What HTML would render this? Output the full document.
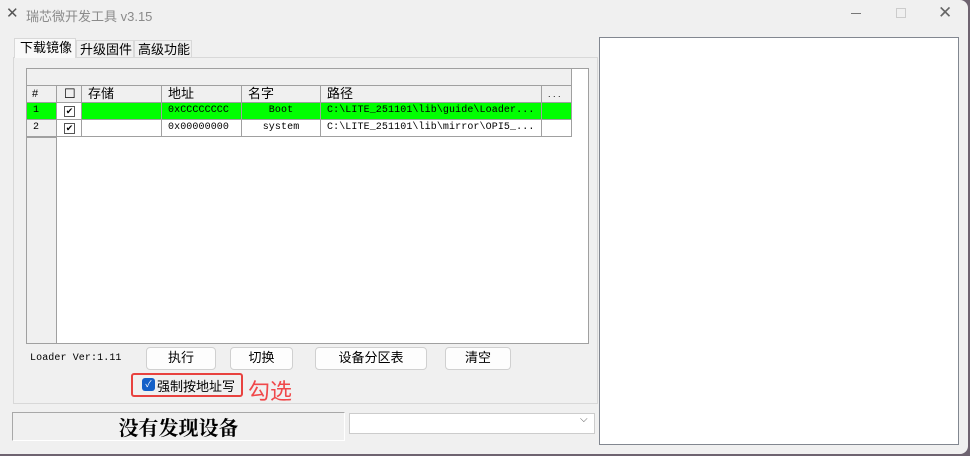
<!DOCTYPE html>
<html><head><meta charset="utf-8"><style>
*{margin:0;padding:0;box-sizing:border-box}
body{width:970px;height:456px;background:#6e6370;position:relative;overflow:hidden;font-family:"Liberation Sans","Noto Sans CJK SC",sans-serif}
.win{position:absolute;left:0;top:0;width:968px;height:454px;background:#f0f0f0;border-radius:0 8px 8px 0}
.a{position:absolute}
.t{font-size:13px;color:#000;white-space:nowrap}
.mono{font-family:"Liberation Mono","Noto Sans CJK SC",monospace;font-size:10px;letter-spacing:0.1px}
.btn{position:absolute;background:#fdfdfd;border:1px solid #d0d0d0;border-radius:4px;font-size:13px;text-align:center;line-height:20px}
.cell{position:absolute;border-right:1px solid #a0a0a0;border-bottom:1px solid #a0a0a0;height:17px;line-height:16px}
.cb{position:absolute;width:11px;height:11px;border:1px solid #555;background:#fff;font-size:9px;line-height:9px;text-align:center}
</style></head><body><div class="win">
<div class="a t" style="left:6px;top:4px;font-size:15px;color:#555">✕</div>
<div class="a t" style="left:26px;top:6px;color:#8a8a8a;font-size:13px">瑞芯微开发工具 v3.15</div>
<div class="a" style="left:851px;top:13px;width:10px;height:1px;background:#777"></div>
<div class="a" style="left:896px;top:8px;width:10px;height:10px;border:1px solid #ccc"></div>
<div class="a t" style="left:938px;top:3px;font-size:17px;color:#666">✕</div>

<div class="a" style="left:13px;top:57px;width:585px;height:347px;border:1px solid #d8d8d8;background:#f0f0f0"></div>
<div class="a t" style="left:14px;top:38px;width:62px;height:20px;background:#f9f9f9;border:1px solid #d8d8d8;border-bottom:none;padding-left:5px;line-height:18px">下载镜像</div>
<div class="a t" style="left:76px;top:40px;width:58px;height:17px;border:1px solid #d8d8d8;border-bottom:none;padding-left:3px;line-height:17px">升级固件</div>
<div class="a t" style="left:134px;top:40px;width:58px;height:17px;border:1px solid #d8d8d8;border-bottom:none;padding-left:3px;line-height:17px">高级功能</div>

<div class="a" style="left:26px;top:68px;width:563px;height:276px;border:1px solid #a0a0a0;background:#fff"></div>
<div class="a" style="left:27px;top:69px;width:545px;height:17px;background:#f0f0f0;border-bottom:1px solid #a0a0a0;border-right:1px solid #a0a0a0"></div>
<div class="a" style="left:27px;top:86px;width:30px;height:257px;background:#f0f0f0;border-right:1px solid #a0a0a0"></div>

<div class="cell t" style="left:27px;top:86px;width:30px;background:#f0f0f0;padding-left:5px;font-size:11px">#</div>
<div class="cell t" style="left:57px;top:86px;width:25px;background:#f0f0f0;padding-left:7px">☐</div>
<div class="cell t" style="left:82px;top:86px;width:80px;background:#f0f0f0;padding-left:6px">存储</div>
<div class="cell t" style="left:162px;top:86px;width:80px;background:#f0f0f0;padding-left:6px">地址</div>
<div class="cell t" style="left:242px;top:86px;width:79px;background:#f0f0f0;padding-left:6px">名字</div>
<div class="cell t" style="left:321px;top:86px;width:221px;background:#f0f0f0;padding-left:6px">路径</div>
<div class="cell t" style="left:542px;top:86px;width:30px;background:#f0f0f0;padding-left:6px;font-size:9px">. . .</div>

<div class="cell t mono" style="left:27px;top:103px;width:30px;background:#00ff00;padding-left:6px">1</div>
<div class="cell" style="left:57px;top:103px;width:25px;background:#fff"></div>
<div class="cb" style="left:64px;top:106px">✔</div>
<div class="cell" style="left:82px;top:103px;width:80px;background:#00ff00"></div>
<div class="cell t mono" style="left:162px;top:103px;width:80px;background:#00ff00;padding-left:6px">0xCCCCCCCC</div>
<div class="cell t mono" style="left:242px;top:103px;width:79px;background:#00ff00;text-align:center">Boot</div>
<div class="cell t mono" style="left:321px;top:103px;width:221px;background:#00ff00;padding-left:6px">C:\LITE_251101\lib\guide\Loader...</div>
<div class="cell" style="left:542px;top:103px;width:30px;background:#00ff00"></div>

<div class="cell t mono" style="left:27px;top:120px;width:30px;background:#f0f0f0;padding-left:6px">2</div>
<div class="cell" style="left:57px;top:120px;width:25px;background:#fff"></div>
<div class="cb" style="left:64px;top:123px">✔</div>
<div class="cell" style="left:82px;top:120px;width:80px;background:#fff"></div>
<div class="cell t mono" style="left:162px;top:120px;width:80px;background:#fff;padding-left:6px">0x00000000</div>
<div class="cell t mono" style="left:242px;top:120px;width:79px;background:#fff;text-align:center">system</div>
<div class="cell t mono" style="left:321px;top:120px;width:221px;background:#fff;padding-left:6px">C:\LITE_251101\lib\mirror\OPI5_...</div>
<div class="cell" style="left:542px;top:120px;width:30px;background:#fff"></div>
<div class="a" style="left:27px;top:137px;width:30px;height:1px;background:#a0a0a0"></div>

<div class="a t mono" style="left:30px;top:353px">Loader Ver:1.11</div>
<div class="btn" style="left:146px;top:347px;width:70px;height:23px">执行</div>
<div class="btn" style="left:230px;top:347px;width:63px;height:23px">切换</div>
<div class="btn" style="left:315px;top:347px;width:112px;height:23px">设备分区表</div>
<div class="btn" style="left:445px;top:347px;width:66px;height:23px">清空</div>

<div class="a" style="left:131px;top:373px;width:112px;height:24px;border:2px solid #e8423f;border-radius:3px"></div>
<div class="a" style="left:142px;top:378px;width:13px;height:13px;background:#1460c8;border-radius:3px;color:#fff;font-size:9px;text-align:center;line-height:13px">✓</div>
<div class="a t" style="left:157px;top:376px">强制按地址写</div>
<div class="a" style="left:248px;top:375px;font-size:22px;color:#f0484a;font-family:'Noto Sans CJK SC',sans-serif;line-height:30px">勾选</div>

<div class="a" style="left:12px;top:412px;width:333px;height:29px;border:1px solid #a8a8a8;border-right-color:#fff;border-bottom-color:#fff;background:#f0f0f0;text-align:center;font-family:'Noto Serif CJK SC',serif;font-weight:bold;font-size:20px;line-height:27px">没有发现设备</div>
<div class="a" style="left:349px;top:413px;width:246px;height:21px;background:#fff;border:1px solid #ccc"></div>
<div class="a t" style="left:580px;top:414px;font-size:10px;color:#555">⌵</div>

<div class="a" style="left:599px;top:37px;width:360px;height:408px;background:#fff;border:1px solid #828790"></div>
</div></body></html>
